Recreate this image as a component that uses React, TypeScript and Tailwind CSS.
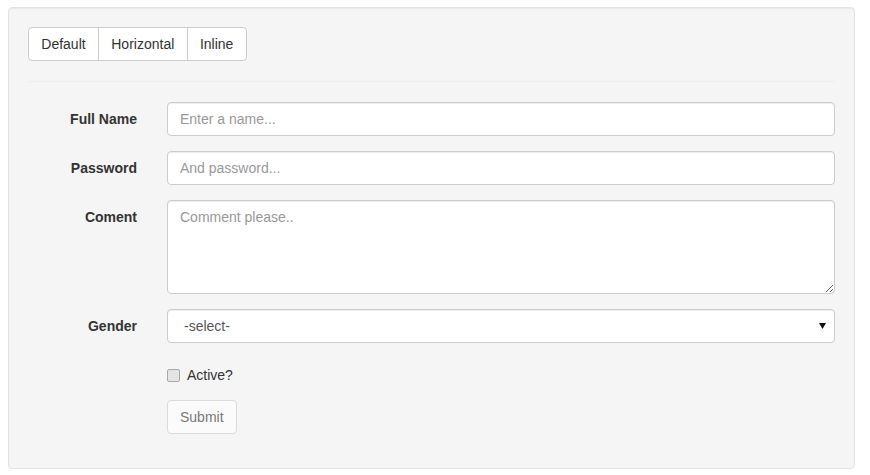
import React from 'react'

const inputCls =
  'block w-full h-[34px] px-3 text-[14px] text-[#555] bg-white border border-[#ccc] rounded-[4px] shadow-[inset_0_1px_1px_rgba(0,0,0,0.075)] placeholder:text-[#999] outline-none'

const Row = ({ label, children }: { label: string; children: React.ReactNode }) => (
  <div className="flex mb-[15px]">
    <label className="w-[109px] shrink-0 text-right font-bold text-[14px] leading-[20px] pt-[7px] text-[#333]">
      {label}
    </label>
    <div className="ml-[30px] flex-1">{children}</div>
  </div>
)

export default function App() {
  return (
    <div className="pt-[7px] pl-2 font-['Liberation_Sans',Arial,sans-serif] text-[14px] text-[#333]">
      <div className="w-[847px] bg-[#f5f5f5] border border-[#e3e3e3] rounded-[4px] shadow-[inset_0_1px_1px_rgba(0,0,0,0.05)] p-[19px]">
        <div className="flex">
          {['Default', 'Horizontal', 'Inline'].map((t, i) => (
            <button
              key={t}
              className={[
                'h-[34px] px-[12.3px] bg-white border border-[#ccc] text-[14px] leading-[20px] text-[#333]',
                i === 0 ? 'rounded-l-[4px]' : '-ml-px',
                i === 2 ? 'rounded-r-[4px]' : '',
              ].join(' ')}
            >
              {t}
            </button>
          ))}
        </div>
        <hr className="my-5 border-0 border-t border-[#eee]" />
        <form className="pb-[15px]">
          <Row label="Full Name">
            <input className={inputCls} placeholder="Enter a name..." />
          </Row>
          <Row label="Password">
            <input type="password" className={inputCls} placeholder="And password..." />
          </Row>
          <Row label="Coment">
            <textarea
              className="block w-full h-[94px] px-3 py-[6px] text-[14px] leading-[20px] text-[#555] bg-white border border-[#ccc] rounded-[4px] shadow-[inset_0_1px_1px_rgba(0,0,0,0.075)] placeholder:text-[#999] outline-none"
              placeholder="Comment please.."
            />
          </Row>
          <Row label="Gender">
            <div className="relative">
              <select className="block w-full h-[34px] pl-[16px] pr-8 text-[14px] text-[#555] bg-white border border-[#ccc] rounded-[4px] shadow-[inset_0_1px_1px_rgba(0,0,0,0.075)] appearance-none outline-none">
                <option>-select-</option>
                <option>Male</option>
                <option>Female</option>
              </select>
              <svg className="absolute right-[9px] top-[14px]" width="7" height="6" viewBox="0 0 7 6">
                <path d="M0 0H7L3.5 6Z" fill="#111" />
              </svg>
            </div>
          </Row>
          <div className="ml-[139px] pt-[7px]">
            <label className="flex items-center h-[20px] mb-[15px] text-[14px] text-[#333]">
              <input
                type="checkbox"
                className="appearance-none w-[13px] h-[13px] m-0 mr-[7px] bg-[#e4e4e4] border border-[#a9a9a9] rounded-[2px] checked:bg-[#3b82f6]"
              />
              <span>Active?</span>
            </label>
            <button
              disabled
              className="h-[34px] px-3 text-[14px] text-[#333] bg-white border border-[#ccc] rounded-[4px] opacity-65"
            >
              Submit
            </button>
          </div>
        </form>
      </div>
    </div>
  )
}
